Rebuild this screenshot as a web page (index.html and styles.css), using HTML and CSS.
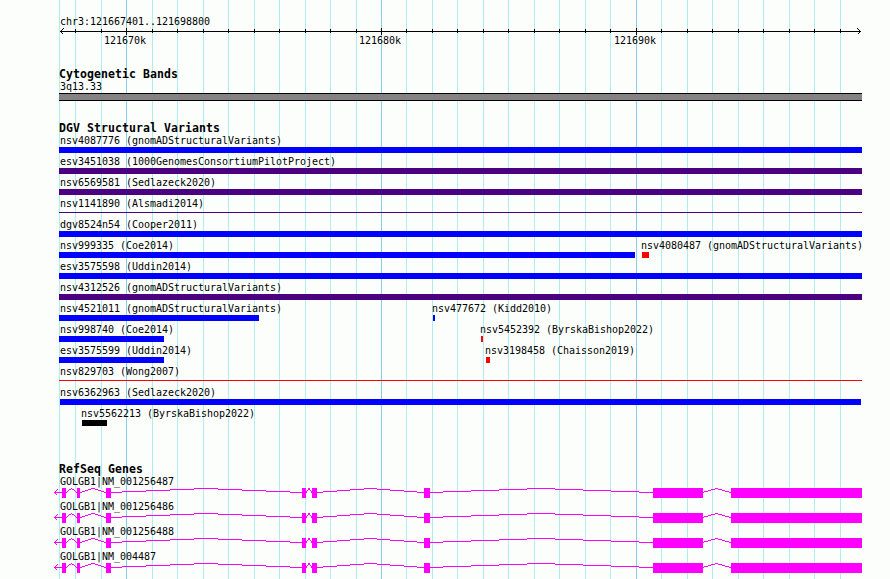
FILE: index.html
```
<!DOCTYPE html>
<html lang="en">
<head>
    <meta charset="UTF-8">
    <title>chr3:121667401..121698800</title>
    <link rel="stylesheet" href="styles.css">
</head>
<body>

<div class="browser_panel">

    <!-- ===== GRID LINES ===== -->
    <svg class="grid_lines" width="890" height="579">
        <path class="grid_minor" d="M59.5 0v579M75.5 0v579M101.5 0v579M152.5 0v579M177.5 0v579M203.5 0v579M228.5 0v579M254.5 0v579M279.5 0v579M305.5 0v579M330.5 0v579M356.5 0v579M406.5 0v579M432.5 0v579M457.5 0v579M483.5 0v579M508.5 0v579M534.5 0v579M559.5 0v579M585.5 0v579M610.5 0v579M661.5 0v579M687.5 0v579M712.5 0v579M738.5 0v579M763.5 0v579M789.5 0v579M814.5 0v579M840.5 0v579" />
        <path class="grid_major" d="M126.5 0v579M381.5 0v579M636.5 0v579" />
    </svg>

    <!-- ===== SCALE ===== -->
    <div class="scale_track">
        <p class="label">chr3:121667401..121698800</p>
        <svg class="scale_axis" width="803" height="8">
            <path d="M1 3.5h801" />
            <path d="M16.5 1v4M42.5 1v4M93.5 1v4M118.5 1v4M144.5 1v4M169.5 1v4M195.5 1v4M220.5 1v4M246.5 1v4M271.5 1v4M297.5 1v4M347.5 1v4M373.5 1v4M398.5 1v4M424.5 1v4M449.5 1v4M475.5 1v4M500.5 1v4M526.5 1v4M551.5 1v4M602.5 1v4M628.5 1v4M653.5 1v4M679.5 1v4M704.5 1v4M730.5 1v4M755.5 1v4M781.5 1v4" />
            <path d="M67.5 0v7M322.5 0v7M577.5 0v7" />
            <path d="M4.5 0.5L1.5 3.5L4.5 6.5M798.5 0.5L801.5 3.5L798.5 6.5" />
        </svg>
        <div class="scale_numbers">
            <span class="label">121670k</span>
            <span class="label">121680k</span>
            <span class="label">121690k</span>
        </div>
    </div>

    <!-- ===== CYTOGENETIC BANDS ===== -->
    <div class="track band_track">
        <h3>Cytogenetic Bands</h3>
        <p class="label">3q13.33</p>
        <div class="band"></div>
    </div>

    <!-- ===== STRUCTURAL VARIANTS ===== -->
    <div class="track variant_track">
        <h3>DGV Structural Variants</h3>
        <div class="row"><div class="feature"><p class="label">nsv4087776 (gnomADStructuralVariants)</p><div class="bar gain" style="width: 803px"></div></div></div>
        <div class="row"><div class="feature"><p class="label">esv3451038 (1000GenomesConsortiumPilotProject)</p><div class="bar complex" style="width: 803px"></div></div></div>
        <div class="row"><div class="feature"><p class="label">nsv6569581 (Sedlazeck2020)</p><div class="bar complex" style="width: 803px"></div></div></div>
        <div class="row"><div class="feature"><p class="label">nsv1141890 (Alsmadi2014)</p><div class="bar thin complex" style="width: 803px"></div></div></div>
        <div class="row"><div class="feature"><p class="label">dgv8524n54 (Cooper2011)</p><div class="bar gain" style="width: 803px"></div></div></div>
        <div class="row">
            <div class="feature"><p class="label">nsv999335 (Coe2014)</p><div class="bar gain" style="width: 576px"></div></div>
            <div class="feature inner" style="margin-left: 7px"><p class="label">nsv4080487 (gnomADStructuralVariants)</p><div class="bar loss" style="width: 7px"></div></div>
        </div>
        <div class="row"><div class="feature"><p class="label">esv3575598 (Uddin2014)</p><div class="bar gain" style="width: 803px"></div></div></div>
        <div class="row"><div class="feature"><p class="label">nsv4312526 (gnomADStructuralVariants)</p><div class="bar complex" style="width: 803px"></div></div></div>
        <div class="row">
            <div class="feature" style="width: 374px"><p class="label">nsv4521011 (gnomADStructuralVariants)</p><div class="bar gain" style="width: 200px"></div></div>
            <div class="feature inner"><p class="label">nsv477672 (Kidd2010)</p><div class="bar gain" style="width: 2px"></div></div>
        </div>
        <div class="row">
            <div class="feature" style="width: 422px"><p class="label">nsv998740 (Coe2014)</p><div class="bar gain" style="width: 105px"></div></div>
            <div class="feature inner"><p class="label">nsv5452392 (ByrskaBishop2022)</p><div class="bar loss" style="width: 2px"></div></div>
        </div>
        <div class="row">
            <div class="feature" style="width: 427px"><p class="label">esv3575599 (Uddin2014)</p><div class="bar gain" style="width: 105px"></div></div>
            <div class="feature inner"><p class="label">nsv3198458 (Chaisson2019)</p><div class="bar loss" style="width: 4px"></div></div>
        </div>
        <div class="row"><div class="feature"><p class="label">nsv829703 (Wong2007)</p><div class="bar thin loss" style="width: 803px"></div></div></div>
        <div class="row"><div class="feature"><p class="label">nsv6362963 (Sedlazeck2020)</p><div class="bar gain" style="width: 801px; margin-left: 1px"></div></div></div>
        <div class="row"><div class="feature inner" style="margin-left: 23px"><p class="label">nsv5562213 (ByrskaBishop2022)</p><div class="bar other" style="width: 25px"></div></div></div>
    </div>

    <!-- ===== GENES ===== -->
    <svg class="defs" width="0" height="0">
        <defs>
            <g id="transcript">
                <path class="exon" d="M8 0h4v10h-4zM23 0h3v10h-3zM52 0h5v10h-5zM248 0h4v10h-4zM258 0h5v10h-5zM370 0h6v10h-6zM599 0h50v10h-50zM677 0h131v10h-131z" />
                <!-- stepped introns, rising 4px to the middle and back -->
                <path class="intron" d="M12 4.5h1m0-1h1m0-1h1m0-1h2m0-1h1m0 1h2m0 1h1m0 1h1m0 1h1" />
                <path class="intron" d="M26 4.5h2m0-1h3m0-1h3m0-1h3m0-1h4m0 1h3m0 1h3m0 1h3m0 1h2" />
                <path class="intron" d="M57 4.5h11m0-1h24m0-1h24m0-1h24m0-1h24m0 1h24m0 1h24m0 1h24m0 1h12" />
                <path class="intron" d="M252 4.5L255 0.5L258 4.5" />
                <path class="intron" d="M263 4.5h6m0-1h14m0-1h13m0-1h14m0-1h13m0 1h13m0 1h14m0 1h13m0 1h7" />
                <path class="intron" d="M376 4.5h13m0-1h28m0-1h28m0-1h28m0-1h28m0 1h28m0 1h28m0 1h28m0 1h14" />
                <path class="intron" d="M649 4.5h1m0-1h4m0-1h3m0-1h4m0-1h3m0 1h4m0 1h3m0 1h4m0 1h2" />
                <path class="intron" d="M0 4.5h8M3.5 1.5L0.5 4.5L3.5 7.5" />
            </g>
        </defs>
    </svg>
    <div class="track gene_track">
        <h3>RefSeq Genes</h3>
        <div class="gene"><p class="label">GOLGB1|NM_001256487</p><svg width="808" height="10"><use href="#transcript" /></svg></div>
        <div class="gene"><p class="label">GOLGB1|NM_001256486</p><svg width="808" height="10"><use href="#transcript" /></svg></div>
        <div class="gene"><p class="label">GOLGB1|NM_001256488</p><svg width="808" height="10"><use href="#transcript" /></svg></div>
        <div class="gene"><p class="label">GOLGB1|NM_004487</p><svg width="808" height="10"><use href="#transcript" /></svg></div>
    </div>

</div>

</body>
</html>
```

FILE: styles.css
```
body {
    margin: 0;
    background-color: #fcfefc;
    color: #000;
    font-family: 'DejaVu Sans Mono', monospace;
}

.browser_panel {
    position: relative;
    box-sizing: border-box;
    width: 890px;
    height: 579px;
    padding: 13px 28px 0 59px;
    overflow: hidden;
}

svg {
    display: block;
    shape-rendering: crispEdges;
}

h3 {
    margin: 0;
    height: 12px;
    font-size: 11.5px;
    line-height: 17px;
    letter-spacing: 0.077px;
    white-space: nowrap;
}

.label {
    margin: 0 0 0 1px;
    height: 15px;
    font-size: 10px;
    line-height: 17px;
    letter-spacing: -0.02px;
    white-space: nowrap;
}

/* ===== Grid ===== */
.grid_lines {
    position: absolute;
    top: 0;
    left: 0;
    z-index: -1;
}

.grid_minor {
    stroke: #afeeee;
}

.grid_major {
    stroke: #87ceeb;
}

/* ===== Scale ===== */
.scale_track {
    height: 53px;
}

.scale_axis {
    fill: none;
    stroke: #000;
}

.scale_numbers {
    display: flex;
    gap: 213px;
    margin: -4px 0 0 45px;
}

.scale_numbers .label {
    width: 42px;
    margin: 0;
}

/* ===== Tracks ===== */
.band_track {
    height: 54px;
}

.band {
    box-sizing: border-box;
    height: 8px;
    border: solid #000;
    border-width: 1px 0;
    background-color: #848284;
}

.variant_track {
    height: 341px;
}

.row {
    display: flex;
    height: 21px;
}

.inner .label {
    margin-left: -1px;
}

.bar {
    height: 6px;
}

.thin {
    height: 1px;
    margin-top: 2px;
}

.gain {
    background-color: #0000ff;
}

.loss {
    background-color: #ff0000;
}

.complex {
    background-color: #4b0082;
}

.other {
    background-color: #000;
}

/* ===== Genes ===== */
.defs {
    position: absolute;
}

.gene {
    height: 25px;
}

.gene svg {
    margin-left: -5px;
}

.exon {
    fill: #ff00ff;
}

.intron {
    fill: none;
    stroke: #ff00ff;
}
```
